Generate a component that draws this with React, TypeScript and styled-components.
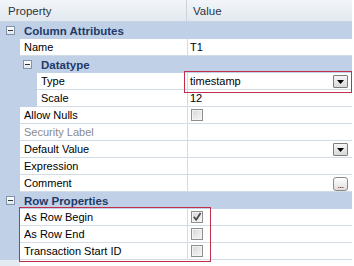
import React from "react";
import styled, { createGlobalStyle } from "styled-components";

type Editor = "combo" | "check" | "checked" | "ellipsis";

interface GridRow {
  kind: "cat" | "prop";
  label: string;
  level: number;
  value?: string;
  editor?: Editor;
  disabled?: boolean;
}

const rows: GridRow[] = [
  { kind: "cat", label: "Column Attributes", level: 0 },
  { kind: "prop", label: "Name", level: 0, value: "T1" },
  { kind: "cat", label: "Datatype", level: 1 },
  { kind: "prop", label: "Type", level: 1, value: "timestamp", editor: "combo" },
  { kind: "prop", label: "Scale", level: 1, value: "12" },
  { kind: "prop", label: "Allow Nulls", level: 0, editor: "check" },
  { kind: "prop", label: "Security Label", level: 0, disabled: true },
  { kind: "prop", label: "Default Value", level: 0, editor: "combo" },
  { kind: "prop", label: "Expression", level: 0 },
  { kind: "prop", label: "Comment", level: 0, editor: "ellipsis" },
  { kind: "cat", label: "Row Properties", level: 0 },
  { kind: "prop", label: "As Row Begin", level: 0, editor: "checked" },
  { kind: "prop", label: "As Row End", level: 0, editor: "check" },
  { kind: "prop", label: "Transaction Start ID", level: 0, editor: "check" },
];

const GUTTER = 20;
const INDENT = 17;
const SPLIT = 187;

const GlobalStyle = createGlobalStyle`
  html, body {
    margin: 0;
    padding: 0;
    background: #ffffff;
  }
  body {
    font-family: "Liberation Sans", Arial, sans-serif;
    font-size: 11px;
    color: #000;
  }
`;

const Grid = styled.div`
  position: relative;
  width: 352px;
  display: flex;
  flex-direction: column;
`;

const Header = styled.div`
  display: flex;
  height: 22px;
  box-sizing: border-box;
  background: linear-gradient(#f2f5f9, #e3e9f0);
  border-bottom: 1px solid #c9d3de;
`;

const HeaderCell = styled.div<{ $w?: number }>`
  display: flex;
  align-items: center;
  box-sizing: border-box;
  font-size: 11.5px;
  color: #2b3440;
  ${(p) => (p.$w ? `flex: 0 0 ${p.$w}px; border-right: 1px solid #cbd4de; padding-left: 8px;` : "flex: 1; padding-left: 6px;")}
`;

const Row = styled.div`
  display: flex;
  height: 17px;
  background: #c0d1e7;
`;

const Gutter = styled.div<{ $w: number }>`
  flex: 0 0 ${(p) => p.$w}px;
  display: flex;
  align-items: center;
  justify-content: flex-end;
  padding-right: 5px;
  box-sizing: border-box;
`;

const CatLabel = styled.div`
  flex: 1;
  display: flex;
  align-items: center;
  padding-left: 4px;
  font-weight: bold;
  font-size: 11.5px;
  color: #1f3a68;
`;

const NameCell = styled.div<{ $w: number; $dim?: boolean }>`
  flex: 0 0 ${(p) => p.$w}px;
  box-sizing: border-box;
  background: #fff;
  border-right: 1px solid #d3dbe4;
  border-bottom: 1px solid #d3dbe4;
  padding-left: 4px;
  display: flex;
  align-items: center;
  white-space: nowrap;
  color: ${(p) => (p.$dim ? "#8a8a8a" : "#000")};
`;

const ValueCell = styled.div`
  flex: 1;
  box-sizing: border-box;
  background: #fff;
  border-bottom: 1px solid #d3dbe4;
  padding-left: 2px;
  padding-right: 4px;
  display: flex;
  align-items: center;
`;

const Expander = styled.div`
  width: 9px;
  height: 9px;
  box-sizing: border-box;
  border: 1px solid #8193aa;
  background: linear-gradient(#ffffff, #dfe6ee);
  display: flex;
  align-items: center;
  justify-content: center;
  &::after {
    content: "";
    width: 5px;
    height: 1px;
    background: #333;
  }
`;

const Check = styled.div`
  width: 12px;
  height: 12px;
  box-sizing: border-box;
  border: 1px solid #8e8e8e;
  box-shadow: inset 0 0 0 1px #f4f4f4;
  background: linear-gradient(135deg, #d6d6d6, #f7f7f7);
  position: relative;
  margin-left: 1px;
`;

const ComboButton = styled.div`
  width: 15px;
  height: 13px;
  margin-left: auto;
  box-sizing: border-box;
  border: 1px solid #7d7d7d;
  border-radius: 1px;
  background: linear-gradient(#f6f6f6, #d9d9d9);
  display: flex;
  align-items: flex-end;
  justify-content: center;
  padding-bottom: 3px;
`;

const EllipsisButton = styled.div`
  width: 15px;
  height: 14px;
  margin-left: auto;
  box-sizing: border-box;
  border: 1px solid #8a8a8a;
  border-radius: 3px;
  background: linear-gradient(#ffffff, #dedede);
  font-size: 9px;
  line-height: 14px;
  text-align: center;
  color: #222;
  margin-top: 2px;
  letter-spacing: -0.5px;
`;

const Mark = styled.div<{ $x: number; $y: number; $w: number; $h: number }>`
  position: absolute;
  left: ${(p) => p.$x}px;
  top: ${(p) => p.$y}px;
  width: ${(p) => p.$w}px;
  height: ${(p) => p.$h}px;
  box-sizing: border-box;
  border: 1px solid #c0304a;
  pointer-events: none;
`;

const Footer = styled.div`
  height: 6px;
  display: flex;
`;

const FooterGutter = styled.div`
  width: ${GUTTER}px;
  background: #e4eaf1;
`;

function Editor({ editor }: { editor?: Editor }) {
  if (editor === "combo")
    return (
      <ComboButton>
        <svg width="7" height="4" viewBox="0 0 7 4">
          <path d="M0 0h7L3.5 4z" fill="#000" />
        </svg>
      </ComboButton>
    );
  if (editor === "ellipsis") return <EllipsisButton>...</EllipsisButton>;
  if (editor === "check" || editor === "checked")
    return (
      <Check>
        {editor === "checked" && (
          <svg width="10" height="10" viewBox="0 0 10 10" style={{ position: "absolute", left: 0, top: 0 }}>
            <path d="M1.8 4.8l2.4 3L8.6 1" stroke="#4a4a4a" strokeWidth="1.8" fill="none" />
          </svg>
        )}
      </Check>
    );
  return null;
}

export default function App() {
  return (
    <>
      <GlobalStyle />
      <Grid>
        <Header>
          <HeaderCell $w={SPLIT}>Property</HeaderCell>
          <HeaderCell>Value</HeaderCell>
        </Header>
        {rows.map((r) => {
          const gut = GUTTER + r.level * INDENT;
          if (r.kind === "cat")
            return (
              <Row key={r.label}>
                <Gutter $w={gut}>
                  <Expander />
                </Gutter>
                <CatLabel>{r.label}</CatLabel>
              </Row>
            );
          return (
            <Row key={r.label}>
              <Gutter $w={gut} />
              <NameCell $w={SPLIT - gut + 1} $dim={r.disabled}>
                {r.label}
              </NameCell>
              <ValueCell>
                {r.value && <span>{r.value}</span>}
                <Editor editor={r.editor} />
              </ValueCell>
            </Row>
          );
        })}
        <Footer>
          <FooterGutter />
        </Footer>
        <Mark $x={184} $y={71} $w={168} $h={22} />
        <Mark $x={19} $y={207} $w={192} $h={55} />
      </Grid>
    </>
  );
}
